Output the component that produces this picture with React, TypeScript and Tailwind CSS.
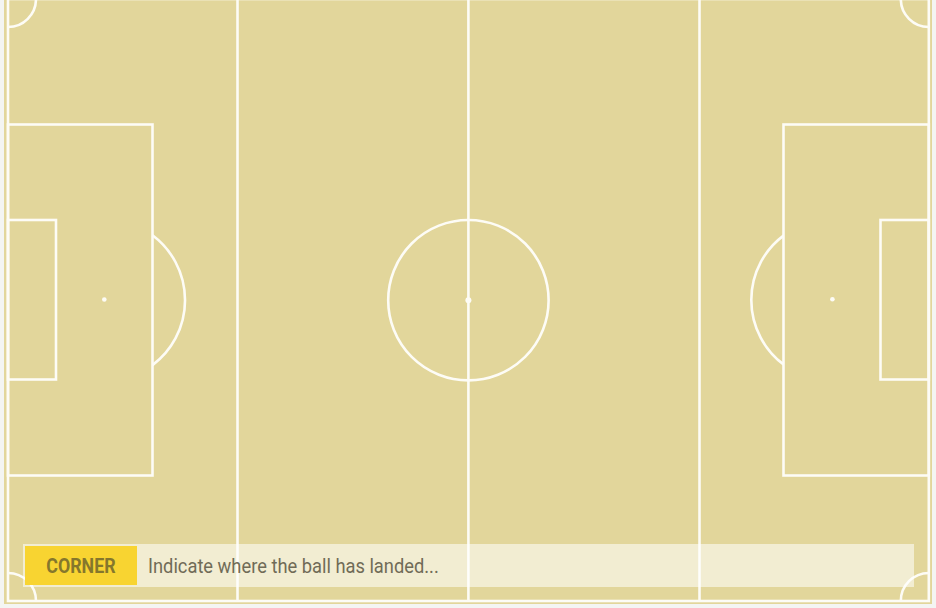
export default function App() {
    const line = "#fdfcf6"
    return (
        <div className="w-[936px] h-[608px] bg-[#f4f5f3] px-[4px] pb-[4px]" style={{ fontFamily: "Roboto, 'Liberation Sans', sans-serif" }}>
            <div className="relative w-[928px] h-[604px] bg-[#e2d69b] overflow-hidden">
                <svg width="928" height="604" viewBox="0 0 928 604" className="block">
                    <g transform="translate(-4 0)" fill="none" stroke={line} strokeWidth="2.6">
                        {/* touchlines */}
                        <rect x="8" y="-1" width="920.8" height="602" />
                        <line x1="237.5" y1="-1" x2="237.5" y2="601" />
                        <line x1="468.4" y1="-1" x2="468.4" y2="601" />
                        <line x1="699.5" y1="-1" x2="699.5" y2="601" />
                        {/* center */}
                        <circle cx="468.4" cy="300.2" r="80.2" />
                        {/* left side */}
                        <rect x="8" y="124.5" width="144.5" height="351" />
                        <rect x="8" y="220" width="48" height="159.5" />
                        <path d="M152.5 235.3 A81 81 0 0 1 152.5 365.1" />
                        {/* right side */}
                        <rect x="783.5" y="124.5" width="145.3" height="351" />
                        <rect x="880.5" y="220" width="48.3" height="159.5" />
                        <path d="M783.5 235.6 A80.5 80.5 0 0 0 783.5 364.4" />
                        {/* corners */}
                        <path d="M36 -1 A28 28 0 0 1 8 27" />
                        <path d="M900.8 -1 A28 28 0 0 0 928.8 27" />
                        <path d="M8 573 A28 28 0 0 1 36 601" />
                        <path d="M928.8 573 A28 28 0 0 0 900.8 601" />
                    </g>
                    <g transform="translate(-4 0)" fill={line}>
                        <circle cx="468.4" cy="300.2" r="3" />
                        <circle cx="104.3" cy="299.5" r="2.3" />
                        <circle cx="832.4" cy="299.3" r="2.3" />
                    </g>
                </svg>
                <div className="absolute left-[19px] top-[544px] w-[891px] h-[43px] bg-white/55 p-[2px] flex items-center">
                    <div className="w-[112px] h-full bg-[#f8d431] flex items-center justify-center">
                        <span className="inline-block scale-x-[0.89] text-[20px] font-bold text-[#85772c] leading-none">CORNER</span>
                    </div>
                    <span className="inline-block ml-[11px] origin-left scale-x-[0.915] text-[20px] text-[#706b57] leading-none">Indicate where the ball has landed...</span>
                </div>
            </div>
        </div>
    )
}
